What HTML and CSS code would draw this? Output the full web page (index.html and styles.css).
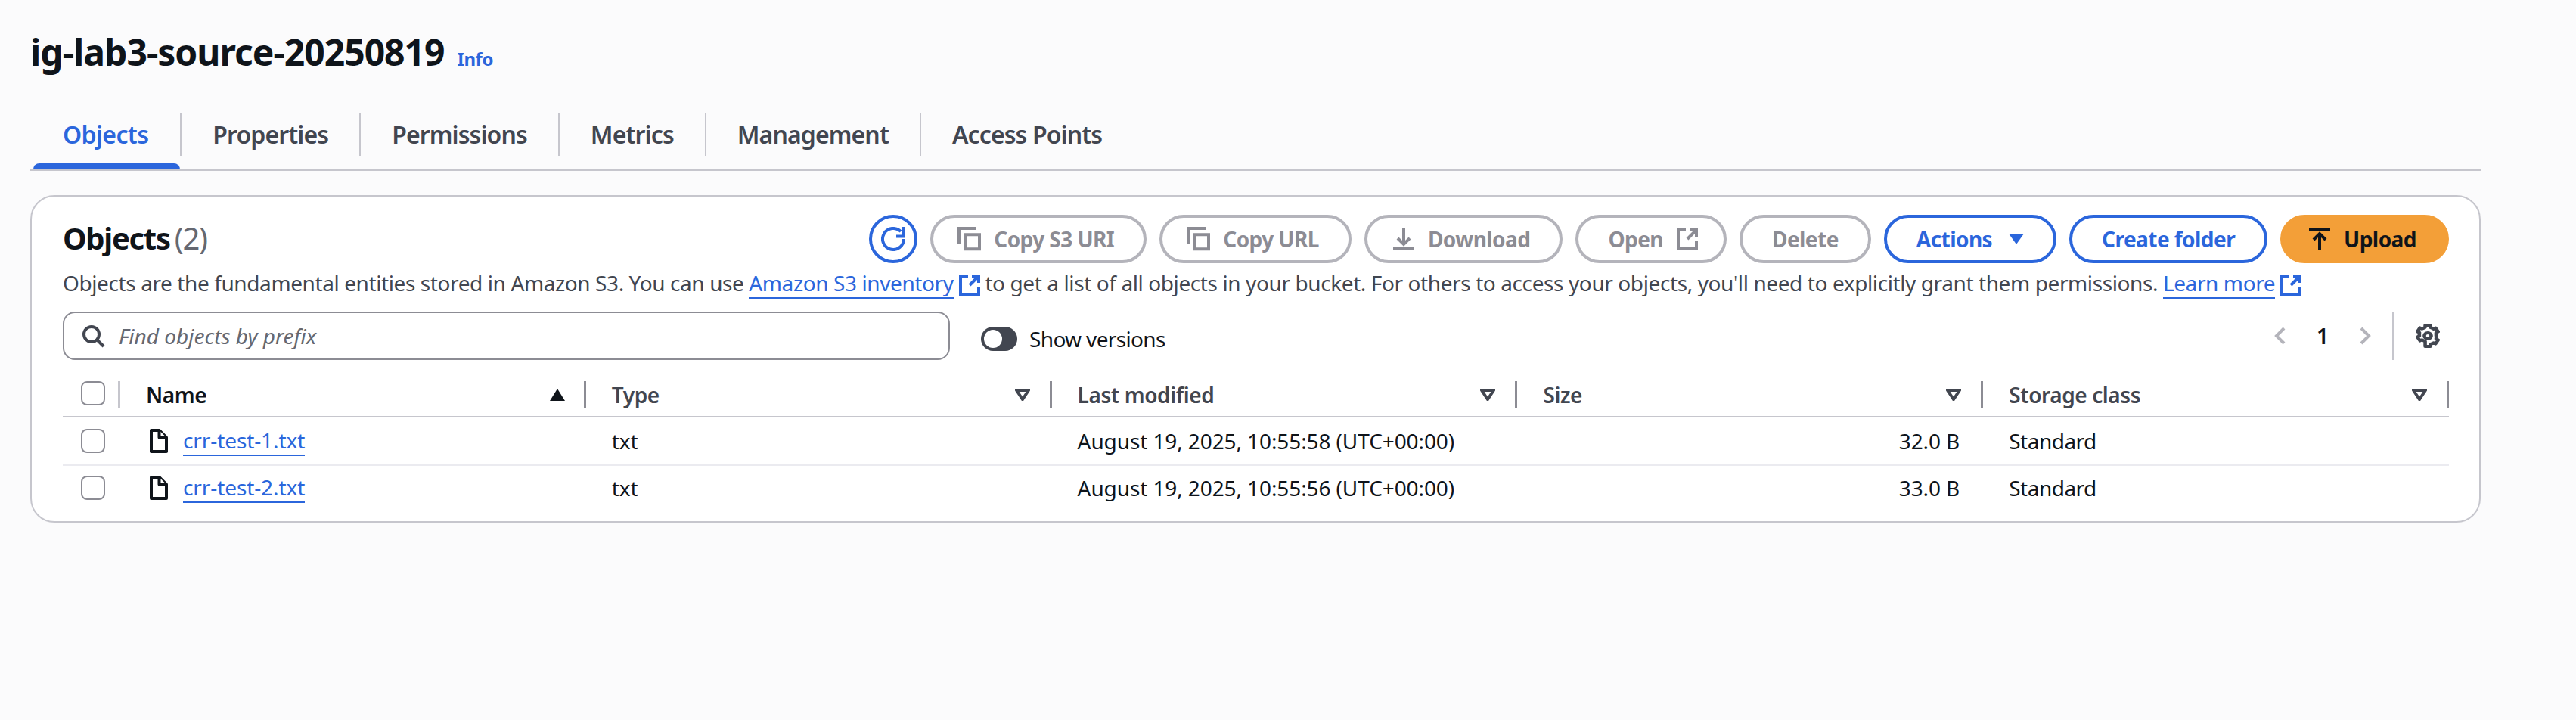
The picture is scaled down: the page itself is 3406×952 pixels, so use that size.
FILE: index.html
```html
<!DOCTYPE html>
<html lang="en">
<head>
    <meta charset="UTF-8">
    <title>ig-lab3-source-20250819</title>
    <link rel="stylesheet" href="styles.css">
</head>
<body>
    <main class="page">
        <div class="title-row">
            <h1>ig-lab3-source-20250819</h1>
            <a class="info-link">Info</a>
        </div>

        <nav class="tabs">
            <div class="tab active"><span class="tab-label">Objects</span></div>
            <div class="tab"><span class="tab-label">Properties</span></div>
            <div class="tab"><span class="tab-label">Permissions</span></div>
            <div class="tab"><span class="tab-label">Metrics</span></div>
            <div class="tab"><span class="tab-label">Management</span></div>
            <div class="tab last"><span class="tab-label">Access Points</span></div>
        </nav>

        <section class="card">
            <div class="card-head">
                <h2>Objects <span class="count">(2)</span></h2>
                <div class="actions">
                    <button class="btn normal round">
                        <svg class="icon" viewBox="0 0 16 16"><path d="M15 8a7 7 0 1 1-2-4.900"/><path d="M14.500 0v6.200H10"/></svg>
                    </button>
                    <button class="btn" disabled>
                        <svg class="icon lead" viewBox="0 0 16 16"><path d="M1 11.500V1h11.500"/><path d="M5.150 5.150h9.350v9.500H5.150z"/></svg>
                        Copy S3 URI
                    </button>
                    <button class="btn" disabled>
                        <svg class="icon lead" viewBox="0 0 16 16"><path d="M1 11.500V1h11.500"/><path d="M5.150 5.150h9.350v9.500H5.150z"/></svg>
                        Copy URL
                    </button>
                    <button class="btn" disabled>
                        <svg class="icon lead" viewBox="0 0 16 16"><path d="M1 14.500h14"/><path d="M8 1v10.500"/><path d="M4 7.500l4 4 4-4"/></svg>
                        Download
                    </button>
                    <button class="btn" disabled>
                        Open
                        <svg class="icon trail" viewBox="0 0 16 16"><path d="M7 2H2v12h12V9"/><path d="M9.500 2H14v4.500"/><path d="M14 2L8 8"/></svg>
                    </button>
                    <button class="btn" disabled>Delete</button>
                    <button class="btn normal">
                        Actions
                        <svg class="caret" viewBox="0 0 20 16"><path d="M0 1h20L10 15z"/></svg>
                    </button>
                    <button class="btn normal">Create folder</button>
                    <button class="btn primary">
                        <svg class="icon lead" viewBox="0 0 16 16"><path d="M1 1.500h14"/><path d="M8 15V5"/><path d="M4 8.500l4-4 4 4"/></svg>
                        Upload
                    </button>
                </div>
            </div>

            <p class="description">
                Objects are the fundamental entities stored in Amazon S3. You can use
                <a class="link">Amazon S3 inventory</a>
                <svg class="icon external" viewBox="0 0 16 16"><path d="M7 2H2v12h12V9"/><path d="M9.500 2H14v4.500"/><path d="M14 2L8 8"/></svg>
                to get a list of all objects in your bucket. For others to access your objects, you'll need to explicitly grant them permissions.
                <a class="link">Learn more</a>
                <svg class="icon external" viewBox="0 0 16 16"><path d="M7 2H2v12h12V9"/><path d="M9.500 2H14v4.500"/><path d="M14 2L8 8"/></svg>
            </p>

            <div class="toolbar">
                <div class="search">
                    <svg class="icon search-icon" viewBox="0 0 16 16"><circle cx="7" cy="7" r="5"/><path d="M10.500 10.500L15 15"/></svg>
                    <span class="placeholder">Find objects by prefix</span>
                </div>
                <div class="toggle-wrap">
                    <span class="toggle"><span class="knob"></span></span>
                    <span>Show versions</span>
                </div>
                <div class="pager">
                    <svg class="chevron" viewBox="0 0 16 26"><path d="M13 3L3 13l10 10"/></svg>
                    <span class="page-num">1</span>
                    <svg class="chevron" viewBox="0 0 16 26"><path d="M3 3l10 10L3 23"/></svg>
                    <span class="pager-sep"></span>
                    <svg class="icon gear" viewBox="1.500 0 14 16" preserveAspectRatio="none"><path d="M13.300 5.950l1.200-.7-1.500-2.500-1.200.7c-.5-.4-1-.7-1.800-1V1H7v1.400c-.7.3-1.300.6-1.800 1L4 2.700 2.500 5.200l1.200.7a6 6 0 0 0 0 2.100l-1.200.7 1.500 2.600 1.200-.7c.5.4 1.100.8 1.800 1V15h3v-1.400c.7-.3 1.300-.6 1.800-1l1.200.7 1.500-2.600-1.200-.7a6 6 0 0 0 0-2.200z"/><circle cx="8.500" cy="8" r="2"/></svg>
                </div>
            </div>

            <div class="table">
                <div class="row head">
                    <div class="cell check-cell"><span class="checkbox"></span></div>
                    <div class="cell"><span class="col-name sorted">Name</span><svg class="sort" viewBox="0 0 20 16"><path d="M10 0l10 16H0z"/></svg></div>
                    <div class="cell"><span class="col-name">Type</span><svg class="filter" viewBox="0 0 20 16"><path d="M2 2h16L10 14z"/></svg></div>
                    <div class="cell"><span class="col-name">Last modified</span><svg class="filter" viewBox="0 0 20 16"><path d="M2 2h16L10 14z"/></svg></div>
                    <div class="cell"><span class="col-name">Size</span><svg class="filter" viewBox="0 0 20 16"><path d="M2 2h16L10 14z"/></svg></div>
                    <div class="cell"><span class="col-name">Storage class</span><svg class="filter" viewBox="0 0 20 16"><path d="M2 2h16L10 14z"/></svg></div>
                </div>
                <div class="row item">
                    <div class="cell check-cell"><span class="checkbox"></span></div>
                    <div class="cell">
                        <svg class="file" viewBox="0 0 24 32"><path d="M2 2h10.500L22 11.500V30H2z"/><path d="M12.500 2v9.500H22"/></svg>
                        <a class="link">crr-test-1.txt</a>
                    </div>
                    <div class="cell">txt</div>
                    <div class="cell">August 19, 2025, 10:55:58 (UTC+00:00)</div>
                    <div class="cell size">32.0 B</div>
                    <div class="cell storage">Standard</div>
                </div>
                <div class="row item">
                    <div class="cell check-cell"><span class="checkbox"></span></div>
                    <div class="cell">
                        <svg class="file" viewBox="0 0 24 32"><path d="M2 2h10.500L22 11.500V30H2z"/><path d="M12.500 2v9.500H22"/></svg>
                        <a class="link">crr-test-2.txt</a>
                    </div>
                    <div class="cell">txt</div>
                    <div class="cell">August 19, 2025, 10:55:56 (UTC+00:00)</div>
                    <div class="cell size">33.0 B</div>
                    <div class="cell storage">Standard</div>
                </div>
            </div>
        </section>
    </main>
</body>
</html>
```

FILE: styles.css
```css
* {
    box-sizing: border-box;
}

body {
    margin: 0;
    background-color: #fbfbfc;
    font-family: "Noto Sans", sans-serif;
    font-size: 28px;
    color: #0f141a;
}

.page {
    width: 3240px;
    margin-left: 40px;
    padding-top: 41px;
}

.title-row {
    display: flex;
    align-items: baseline;
    gap: 17px;
    height: 56px;
}

h1 {
    margin: 0;
    font-size: 48px;
    line-height: 56px;
    font-weight: 700;
    letter-spacing: -1px;
}

.info-link {
    font-size: 24px;
    font-weight: 700;
    letter-spacing: -0.4px;
    color: #2b66dc;
}

/* tabs */
.tabs {
    display: flex;
    height: 76px;
    margin-top: 53px;
    border-bottom: 2px solid #c6c6cd;
}

.tab-label {
    display: block;
    height: 56px;
    padding: 0 41px;
    font-size: 32px;
    line-height: 56px;
    font-weight: 600;
    letter-spacing: -0.9px;
    color: #424650;
    border-right: 2px solid #c6c6cd;
}

.tab.last .tab-label {
    border-right: none;
}

.tab.active .tab-label {
    padding: 0 42px 0 43px;
    letter-spacing: -0.65px;
    color: #2b66dc;
}

.tab.active::after {
    content: "";
    display: block;
    height: 8px;
    margin: 10px 2px 0 4px;
    border-radius: 8px 8px 0 0;
    background-color: #2b66dc;
}

/* card */
.card {
    margin-top: 32px;
    padding: 24px 40px 15px 41px;
    background-color: #fff;
    border: 2px solid #c6c6cd;
    border-radius: 32px;
}

.card-head {
    display: flex;
    align-items: center;
    height: 64px;
}

h2 {
    margin: 0 0 2px;
    font-size: 40px;
    line-height: 48px;
    font-weight: 700;
    letter-spacing: -1.3px;
    word-spacing: -3px;
}

.count {
    font-weight: 400;
    color: #656871;
}

.actions {
    display: flex;
    gap: 17px;
    margin-left: auto;
}

.btn {
    display: flex;
    align-items: center;
    height: 64px;
    padding: 0 39px;
    font-family: inherit;
    font-size: 28px;
    font-weight: 700;
    letter-spacing: -0.55px;
    background-color: #fff;
    border: 4px solid #b4b4bb;
    border-radius: 40px;
    color: #8c8c94;
}

.btn.normal {
    border-color: #2b66dc;
    color: #2b66dc;
}

.btn.round {
    justify-content: center;
    width: 64px;
    padding: 0;
}

.btn.primary {
    background-color: #f39f38;
    border-color: #f39f38;
    color: #0f141a;
}

.icon {
    flex: none;
    width: 32px;
    height: 32px;
    fill: none;
    stroke: currentColor;
    stroke-width: 2;
}

.lead {
    margin: 0 16px 0 -7px;
}

.trail {
    margin: 0 -7px 0 16px;
}

.caret {
    width: 20px;
    height: 16px;
    margin-left: 22px;
    fill: currentColor;
}

.description {
    margin: 8px 0 0;
    height: 36px;
    line-height: 36px;
    letter-spacing: -0.4px;
    color: #424650;
    white-space: nowrap;
}

.link {
    color: #2b66dc;
    border-bottom: 2px solid #2b66dc;
}

.external {
    margin: -8px -2px;
    vertical-align: baseline;
    color: #2b66dc;
}

/* search row */
.toolbar {
    display: flex;
    align-items: center;
    height: 64px;
    margin-top: 20px;
}

.search {
    display: flex;
    align-items: center;
    width: 1173px;
    height: 64px;
    padding-left: 22px;
    border: 2px solid #8c8c94;
    border-radius: 16px;
}

.search-icon {
    color: #424650;
}

.placeholder {
    margin-left: 18px;
    font-style: italic;
    color: #656871;
}

.toggle-wrap {
    display: flex;
    align-items: center;
    gap: 16px;
    margin: 7px 0 0 41px;
    letter-spacing: -0.65px;
}

.toggle {
    display: block;
    width: 48px;
    height: 32px;
    padding: 4px;
    border-radius: 16px;
    background-color: #424650;
}

.knob {
    display: block;
    width: 24px;
    height: 24px;
    border-radius: 50%;
    background-color: #fff;
}

.pager {
    display: flex;
    align-items: center;
    margin-left: auto;
    height: 64px;
}

.chevron {
    width: 16px;
    height: 26px;
    fill: none;
    stroke: #b4b4bb;
    stroke-width: 4;
}

.page-num {
    width: 96px;
    text-align: center;
    font-weight: 600;
}

.pager-sep {
    width: 2px;
    height: 64px;
    margin-left: 28px;
    background-color: #c6c6cd;
}

.gear {
    margin: 0 12px 0 29px;
    color: #424650;
    stroke-linejoin: round;
}

/* table */
.table {
    margin-top: 28px;
}

.row {
    display: grid;
    grid-template-columns: 76px repeat(5, 1fr);
}

.cell {
    display: flex;
    align-items: center;
    padding-left: 34px;
    letter-spacing: -0.1px;
    white-space: nowrap;
}

.check-cell {
    padding-left: 24px;
}

.checkbox {
    display: block;
    width: 32px;
    height: 32px;
    border: 2px solid #8c8c94;
    border-radius: 8px;
    background-color: #fff;
}

.head {
    height: 48px;
    padding-bottom: 10px;
    border-bottom: 2px solid #c6c6cd;
    font-weight: 600;
    color: #424650;
}

.head .cell {
    height: 36px;
    border-right: 3px solid #8c8c94;
    letter-spacing: -0.4px;
}

.head .check-cell {
    align-items: flex-start;
    border-right-color: #c6c6cd;
}

.col-name {
    margin-right: auto;
}

.col-name.sorted {
    color: #0f141a;
}

.sort {
    width: 20px;
    height: 16px;
    margin-right: 25px;
    fill: #0f141a;
}

.filter {
    width: 20px;
    height: 16px;
    margin-right: 26px;
    fill: none;
    stroke: #424650;
    stroke-width: 4;
}

.item {
    height: 64px;
    border-bottom: 2px solid #ebebf0;
}

.item:last-child {
    height: 58px;
    border-bottom: none;
}

.file {
    flex: none;
    width: 24px;
    height: 32px;
    margin: 0 20px 0 5px;
    fill: #fff;
    stroke: #0f141a;
    stroke-width: 4;
    stroke-linejoin: round;
}

.size {
    justify-content: flex-end;
    padding-right: 31px;
}

.storage {
    letter-spacing: -0.5px;
}
```
